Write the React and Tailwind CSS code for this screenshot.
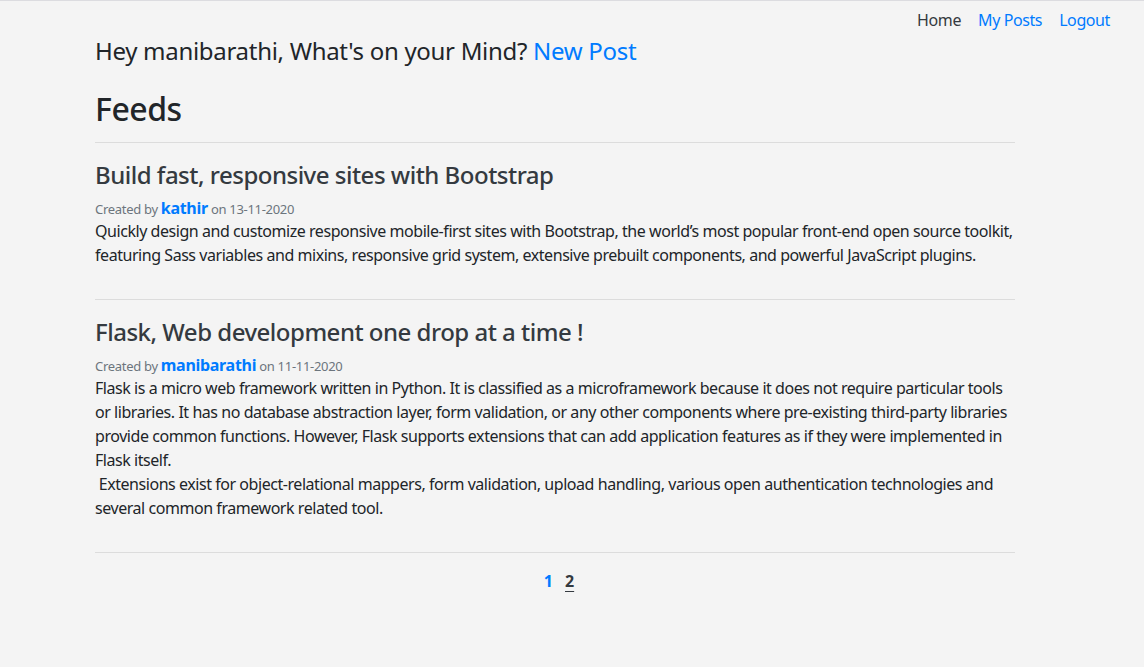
import React from "react";

const posts = [
  {
    title: "Build fast, responsive sites with Bootstrap",
    author: "kathir",
    date: "13-11-2020",
    body: [
      "Quickly design and customize responsive mobile-first sites with Bootstrap, the world’s most popular front-end open source toolkit, featuring Sass variables and mixins, responsive grid system, extensive prebuilt components, and powerful JavaScript plugins.",
    ],
  },
  {
    title: "Flask, Web development one drop at a time !",
    author: "manibarathi",
    date: "11-11-2020",
    body: [
      "Flask is a micro web framework written in Python. It is classified as a microframework because it does not require particular tools or libraries. It has no database abstraction layer, form validation, or any other components where pre-existing third-party libraries provide common functions. However, Flask supports extensions that can add application features as if they were implemented in Flask itself.",
      "\u00a0Extensions exist for object-relational mappers, form validation, upload handling, various open authentication technologies and several common framework related tool.",
    ],
  },
];

const App = () => {
  return (
    <div
      className="min-h-[667px] bg-[#f4f4f4] border-t border-[#dcdce0] text-[#212529]"
      style={{ fontFamily: '"Noto Sans", "Open Sans", sans-serif' }}
    >
      {/* navbar */}
      <nav className="flex justify-end gap-[17px] pr-[34px] pt-[7px] text-base leading-6 tracking-[-0.4px]">
        <a className="text-[#343a40]">Home</a>
        <a className="text-[#007bff]">My Posts</a>
        <a className="text-[#007bff]">Logout</a>
      </nav>

      <div className="ml-[95px] w-[920px]">
        <h4 className="text-2xl leading-[29px] mt-[4px] tracking-[-0.3px]">
          Hey manibarathi, What's on your Mind?{" "}
          <a className="text-[#007bff]">New Post</a>
        </h4>
        <h2 className="text-[32px] leading-[38px] mt-[25px] mb-[14px] font-medium tracking-[-0.5px]">Feeds</h2>

        {posts.map((post) => (
          <div key={post.title} className="border-t border-[#dcdcdc] pt-[17px] pb-[32px]">
            <h4 className="text-2xl leading-[29px] font-medium text-[#343a40] mb-[7px] tracking-[-0.5px]">
              {post.title}
            </h4>
            <div className="text-[13px] text-[#6c757d] leading-[20px] tracking-[-0.3px]">
              Created by{" "}
              <span className="text-base font-bold text-[#007bff]">{post.author}</span> on{" "}
              {post.date}
            </div>
            <div className="text-base leading-6 tracking-[-0.45px] -mt-[1px]">
              {post.body.map((p, i) => (
                <div key={i}>{p}</div>
              ))}
            </div>
          </div>
        ))}

        <div className="border-t border-[#dcdcdc] pt-[16px] pl-[8px] flex justify-center gap-3 text-base font-bold">
          <a className="text-[#007bff]">1</a>
          <a className="text-[#343a40] underline underline-offset-4">2</a>
        </div>
      </div>
    </div>
  );
};

export default App;
